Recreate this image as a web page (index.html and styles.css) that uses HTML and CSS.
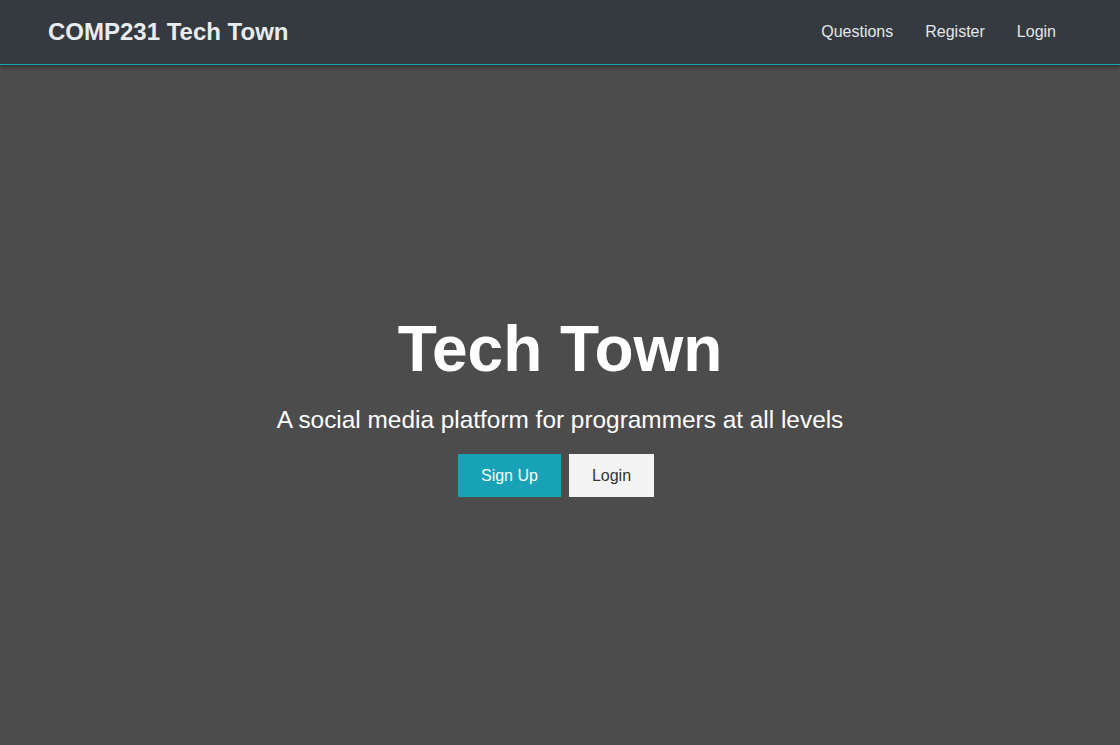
FILE: index.html
```html
<!DOCTYPE html>
<html lang="en">
<head>
<meta charset="utf-8">
<title>COMP231 Tech Town</title>
<link rel="stylesheet" href="styles.css">
</head>
<body>
<header class="navbar">
  <a class="brand" href="#">COMP231 Tech Town</a>
  <nav class="nav">
    <a href="#">Questions</a>
    <a href="#">Register</a>
    <a href="#">Login</a>
  </nav>
</header>
<main class="hero">
  <h1 class="hero-title">Tech Town</h1>
  <p class="hero-lead">A social media platform for programmers at all levels</p>
  <div class="hero-actions">
    <a class="btn btn-primary" href="#">Sign Up</a>
    <a class="btn btn-light" href="#">Login</a>
  </div>
</main>
</body>
</html>
```
FILE: styles.css
```css
* { box-sizing: border-box; }
html, body { height: 100%; }
body {
  margin: 0;
  font-family: "Liberation Sans", Arial, sans-serif;
  background: #4c4c4c;
  color: #fff;
  display: flex;
  flex-direction: column;
}
a { text-decoration: none; }
.navbar {
  height: 65px;
  flex: none;
  display: flex;
  align-items: center;
  justify-content: space-between;
  padding: 0 48px;
  background: #343a40;
  border-bottom: 1px solid #17a2b8;
  box-shadow: 0 2px 3px rgba(0,0,0,0.35);
  position: relative;
  z-index: 1;
}
.brand {
  color: #e9ecef;
  font-size: 24px;
  font-weight: bold;
}
.nav { display: flex; }
.nav a {
  color: #e4e6e8;
  font-size: 16px;
  padding: 0 16px;
}
.hero {
  flex: 1;
  display: flex;
  flex-direction: column;
  align-items: center;
  justify-content: center;
  text-align: center;
}
.hero-title {
  margin: 0;
  font-size: 64px;
  font-weight: bold;
  line-height: 1.15;
}
.hero-lead {
  margin: 20px 0 20px;
  font-size: 24.4px;
  line-height: 1.15;
}
.hero-actions { display: flex; }
.btn {
  display: inline-block;
  font-size: 16px;
  line-height: 19px;
  padding: 12px 23px;
  margin-right: 8px;
}
.btn-primary { background: #17a2b8; color: #fff; }
.btn-light { background: #f4f4f4; color: #333; }
```
